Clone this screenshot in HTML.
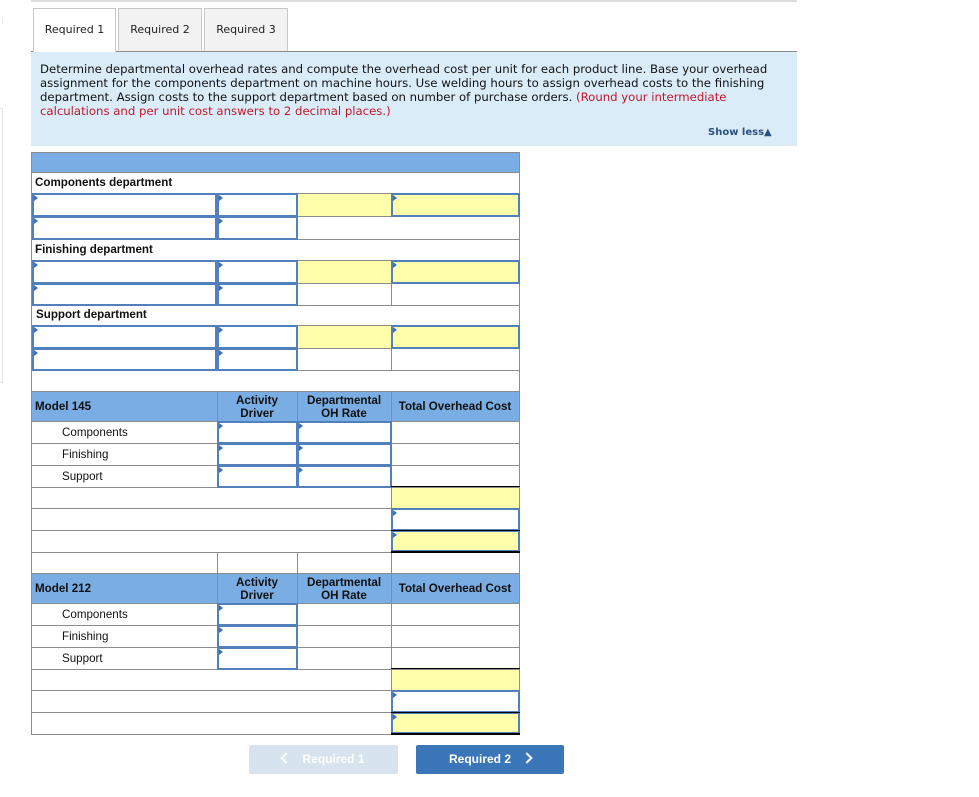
<!DOCTYPE html>
<html><head><meta charset="utf-8"><style>
body{margin:0;width:979px;height:797px;background:#fff;position:relative;overflow:hidden;font-family:"Liberation Sans",Arial,sans-serif;}
div{box-sizing:border-box;}
.a{position:absolute;}
.tab{position:absolute;top:8px;height:44px;border:1px solid #c8c8c8;background:#f2f2f2;font-family:"DejaVu Sans",sans-serif;font-size:11px;color:#222;text-align:center;line-height:42px;}
.hl{position:absolute;height:1px;background:#8c8c8c;}
.vl{position:absolute;width:1px;background:#8c8c8c;}
.in{position:absolute;border:2px solid #5280bd;background:#fff;}
.in::before{content:"";position:absolute;left:0;top:0;border-left:4px solid #3a6fc0;border-top:3px solid transparent;border-bottom:3px solid transparent;}
.y{background:#ffffab;}
.bl{position:absolute;background:#79ade3;}
.t{position:absolute;font-size:11.6px;color:#111;}
.b{font-weight:bold;}
.hd{position:absolute;font-size:11.6px;font-weight:bold;color:#111;text-align:center;line-height:13px;}
.bk{position:absolute;background:#000;}
.chev{display:inline-block;width:6px;height:6px;border-top:2px solid #fff;border-right:2px solid #fff;vertical-align:1px;}
</style></head><body>
<div class="a" style="left:31px;top:0;width:766px;height:2px;background:#ddd"></div>
<div class="a" style="left:0;top:18px;width:3px;height:6px;border-right:1px solid #e5e5e5"></div>
<div class="a" style="left:0;top:108px;width:3px;height:275px;border:1px solid #e5e5e5;border-left:none"></div>
<div class="tab" style="left:33px;width:83px;background:#fff;border-bottom:none;height:44px;z-index:2">Required 1</div>
<div class="tab" style="left:118px;width:84px;">Required 2</div>
<div class="tab" style="left:204px;width:84px;">Required 3</div>
<div class="a" style="left:31px;top:51px;width:766px;height:95px;background:#dbecf9;border-top:1px solid #8c8c8c"></div>
<div class="a" style="left:40px;top:62px;width:740px;font-family:'DejaVu Sans',sans-serif;font-size:11.7px;line-height:14px;color:#111">Determine departmental overhead rates and compute the overhead cost per unit for each product line. Base your overhead assignment for the components department on machine hours. Use welding hours to assign overhead costs to the finishing department. Assign costs to the support department based on number of purchase orders. <span style="color:#c0182b">(Round your intermediate calculations and per unit cost answers to 2 decimal places.)</span></div>
<div class="a" style="left:708px;top:127px;font-family:'DejaVu Sans',sans-serif;font-size:10px;font-weight:bold;color:#2a4f80">Show less&#9650;</div>

<div class="a" style="left:31px;top:152px;width:489px;height:583px;border:1px solid #8c8c8c"></div>
<div class="bl" style="left:32px;top:153px;width:487px;height:19px"></div>
<div class="bl" style="left:32px;top:392px;width:487px;height:29px"></div>
<div class="bl" style="left:32px;top:574px;width:487px;height:29px"></div>

<div class="hl" style="left:31px;width:489px;top:172px"></div>
<div class="hl" style="left:31px;width:489px;top:193px"></div>
<div class="hl" style="left:31px;width:489px;top:216px"></div>
<div class="hl" style="left:31px;width:489px;top:239px"></div>
<div class="hl" style="left:31px;width:489px;top:260px"></div>
<div class="hl" style="left:31px;width:489px;top:283px"></div>
<div class="hl" style="left:31px;width:489px;top:305px"></div>
<div class="hl" style="left:31px;width:489px;top:325px"></div>
<div class="hl" style="left:31px;width:489px;top:348px"></div>
<div class="hl" style="left:31px;width:489px;top:370px"></div>
<div class="hl" style="left:31px;width:489px;top:391px"></div>
<div class="hl" style="left:31px;width:489px;top:421px"></div>
<div class="hl" style="left:31px;width:489px;top:443px"></div>
<div class="hl" style="left:31px;width:489px;top:465px"></div>
<div class="hl" style="left:31px;width:489px;top:487px"></div>
<div class="hl" style="left:31px;width:489px;top:508px"></div>
<div class="hl" style="left:31px;width:489px;top:530px"></div>
<div class="hl" style="left:31px;width:489px;top:552px"></div>
<div class="hl" style="left:31px;width:489px;top:573px"></div>
<div class="hl" style="left:31px;width:489px;top:603px"></div>
<div class="hl" style="left:31px;width:489px;top:625px"></div>
<div class="hl" style="left:31px;width:489px;top:647px"></div>
<div class="hl" style="left:31px;width:489px;top:669px"></div>
<div class="hl" style="left:31px;width:489px;top:690px"></div>
<div class="hl" style="left:31px;width:489px;top:712px"></div>

<div class="vl" style="left:391px;top:260px;height:45px"></div>
<div class="vl" style="left:391px;top:325px;height:45px"></div>
<div class="vl" style="left:217px;top:391px;height:96px"></div>
<div class="vl" style="left:297px;top:391px;height:96px"></div>
<div class="vl" style="left:391px;top:391px;height:343px"></div>
<div class="vl" style="left:217px;top:552px;height:117px"></div>
<div class="vl" style="left:297px;top:552px;height:51px"></div>

<div class="t b" style="left:35px;top:176px">Components department</div>
<div class="t b" style="left:35px;top:243px">Finishing department</div>
<div class="t b" style="left:36px;top:308px">Support department</div>

<div class="a y" style="left:298px;top:194px;width:93px;height:22px"></div>
<div class="a y" style="left:298px;top:261px;width:93px;height:22px"></div>
<div class="a y" style="left:298px;top:326px;width:93px;height:22px"></div>
<div class="a y" style="left:392px;top:488px;width:127px;height:20px"></div>
<div class="a y" style="left:392px;top:670px;width:127px;height:20px"></div>

<div class="in" style="left:32px;top:193px;width:185px;height:24px"></div>
<div class="in" style="left:217px;top:193px;width:81px;height:24px"></div>
<div class="in y" style="left:391px;top:193px;width:129px;height:24px"></div>
<div class="in" style="left:32px;top:216px;width:185px;height:24px"></div>
<div class="in" style="left:217px;top:216px;width:81px;height:24px"></div>
<div class="in" style="left:32px;top:260px;width:185px;height:24px"></div>
<div class="in" style="left:217px;top:260px;width:81px;height:24px"></div>
<div class="in y" style="left:391px;top:260px;width:129px;height:24px"></div>
<div class="in" style="left:32px;top:283px;width:185px;height:23px"></div>
<div class="in" style="left:217px;top:283px;width:81px;height:23px"></div>
<div class="in" style="left:32px;top:325px;width:185px;height:24px"></div>
<div class="in" style="left:217px;top:325px;width:81px;height:24px"></div>
<div class="in y" style="left:391px;top:325px;width:129px;height:24px"></div>
<div class="in" style="left:32px;top:348px;width:185px;height:23px"></div>
<div class="in" style="left:217px;top:348px;width:81px;height:23px"></div>

<div class="t b" style="left:35px;top:400px">Model 145</div>
<div class="hd" style="left:217px;top:394px;width:80px">Activity<br>Driver</div>
<div class="hd" style="left:297px;top:394px;width:94px">Departmental<br>OH Rate</div>
<div class="hd" style="left:391px;top:400px;width:128px">Total Overhead Cost</div>
<div class="t" style="left:62px;top:426px">Components</div>
<div class="t" style="left:62px;top:448px">Finishing</div>
<div class="t" style="left:62px;top:470px">Support</div>
<div class="in" style="left:217px;top:421px;width:81px;height:23px"></div>
<div class="in" style="left:297px;top:421px;width:95px;height:23px"></div>
<div class="in" style="left:217px;top:443px;width:81px;height:23px"></div>
<div class="in" style="left:297px;top:443px;width:95px;height:23px"></div>
<div class="in" style="left:217px;top:465px;width:81px;height:23px"></div>
<div class="in" style="left:297px;top:465px;width:95px;height:23px"></div>
<div class="bk" style="left:391px;top:486px;width:129px;height:1px"></div>
<div class="in" style="left:391px;top:508px;width:129px;height:23px"></div>
<div class="in y" style="left:391px;top:530px;width:129px;height:22px"></div>
<div class="bk" style="left:391px;top:530px;width:129px;height:1px"></div>
<div class="bk" style="left:391px;top:551px;width:129px;height:2px"></div>

<div class="t b" style="left:35px;top:582px">Model 212</div>
<div class="hd" style="left:217px;top:576px;width:80px">Activity<br>Driver</div>
<div class="hd" style="left:297px;top:576px;width:94px">Departmental<br>OH Rate</div>
<div class="hd" style="left:391px;top:582px;width:128px">Total Overhead Cost</div>
<div class="t" style="left:62px;top:608px">Components</div>
<div class="t" style="left:62px;top:630px">Finishing</div>
<div class="t" style="left:62px;top:652px">Support</div>
<div class="in" style="left:217px;top:603px;width:81px;height:23px"></div>
<div class="in" style="left:217px;top:625px;width:81px;height:23px"></div>
<div class="in" style="left:217px;top:647px;width:81px;height:23px"></div>
<div class="bk" style="left:391px;top:668px;width:129px;height:1px"></div>
<div class="in" style="left:391px;top:690px;width:129px;height:23px"></div>
<div class="in y" style="left:391px;top:712px;width:129px;height:22px"></div>
<div class="bk" style="left:391px;top:712px;width:129px;height:1px"></div>
<div class="bk" style="left:391px;top:733px;width:129px;height:2px"></div>

<div class="a" style="left:249px;top:745px;width:149px;height:29px;background:#d8e3f0;border-radius:2px;color:#fff;font-size:12px;font-weight:bold;text-align:center;line-height:29px"><span class="chev" style="transform:rotate(-135deg);margin-right:12px"></span>Required 1</div>
<div class="a" style="left:416px;top:745px;width:148px;height:29px;background:#3b76b9;border-radius:2px;color:#fff;font-size:12px;font-weight:bold;text-align:center;line-height:29px">Required 2<span class="chev" style="transform:rotate(45deg);margin-left:12px"></span></div>
</body></html>
